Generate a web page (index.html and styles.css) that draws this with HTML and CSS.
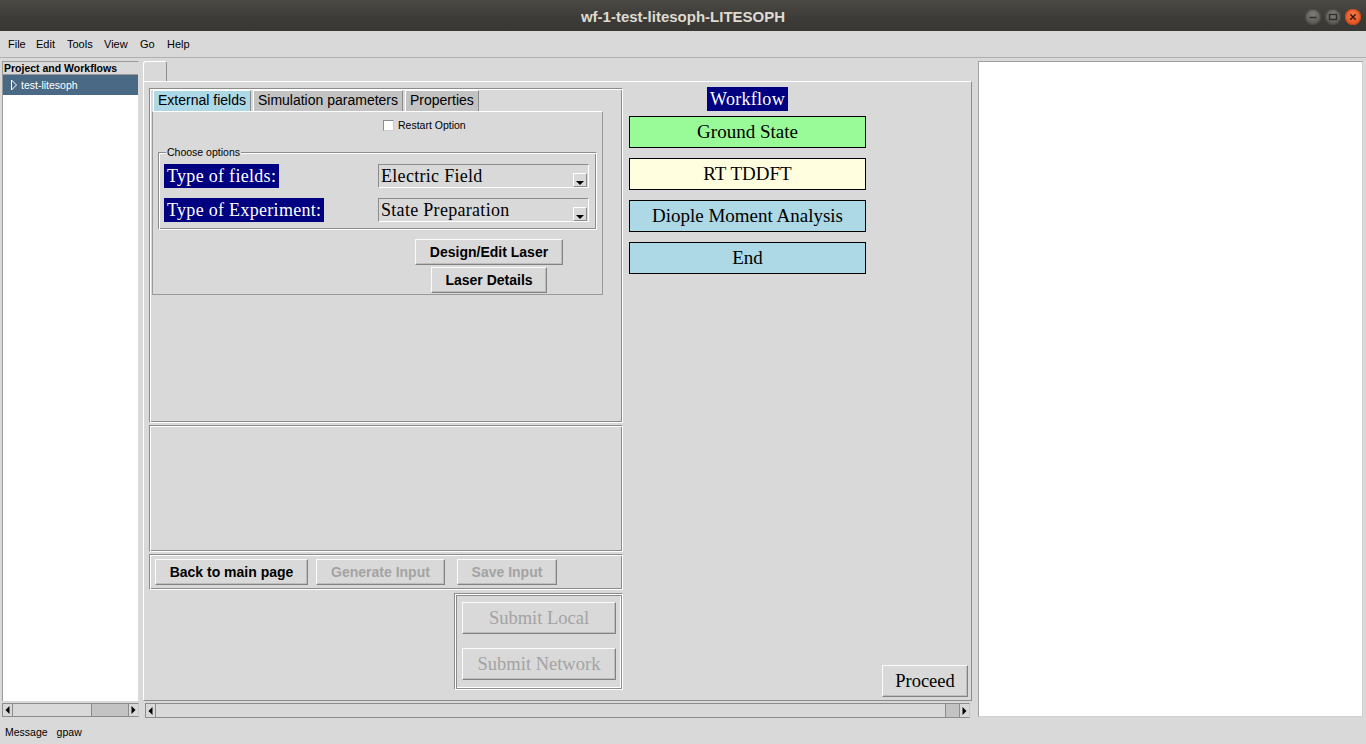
FILE: index.html
```html
<!DOCTYPE html>
<html>
<head>
<meta charset="utf-8">
<title>wf-1-test-litesoph-LITESOPH</title>
<link rel="stylesheet" href="styles.css">
</head>
<body>
<div class="titlebar">
  <span class="title">wf-1-test-litesoph-LITESOPH</span>
  <div class="winbtns">
    <span class="wbtn"><svg width="16" height="16" viewBox="0 0 16 16"><line x1="4.5" y1="8.5" x2="11.5" y2="8.5" stroke="#2e2d2a" stroke-width="1.4"/></svg></span>
    <span class="wbtn"><svg width="16" height="16" viewBox="0 0 16 16"><rect x="4.5" y="5.5" width="7" height="5" fill="none" stroke="#2e2d2a" stroke-width="1.3"/></svg></span>
    <span class="wbtn close"><svg width="16" height="16" viewBox="0 0 16 16"><path d="M5.3 5.3 L10.7 10.7 M10.7 5.3 L5.3 10.7" stroke="#3a1206" stroke-width="1.4"/></svg></span>
  </div>
</div>

<div class="menubar">
  <span class="menu m-file">File</span>
  <span class="menu m-edit">Edit</span>
  <span class="menu m-tools">Tools</span>
  <span class="menu m-view">View</span>
  <span class="menu m-go">Go</span>
  <span class="menu m-help">Help</span>
</div>

<div class="main">
  <div class="sidebar">
    <div class="tree">
      <div class="tree-head">Project and Workflows</div>
      <div class="tree-row">
        <svg class="expander" width="8" height="12" viewBox="0 0 8 12"><path d="M1.5 1 L6.5 6 L1.5 11 Z" fill="none" stroke="#ffffff" stroke-width="1"/></svg>
        <span>test-litesoph</span>
      </div>
    </div>
    <div class="scrollbar sb-left">
      <span class="sb-arrow"><svg width="5" height="8" viewBox="0 0 5 8"><path d="M4.5 0 L0.5 4 L4.5 8 Z" fill="#000"/></svg></span>
      <span class="sb-thumb thumb-left"></span>
      <span class="sb-trough"></span>
      <span class="sb-arrow"><svg width="5" height="8" viewBox="0 0 5 8"><path d="M0.5 0 L4.5 4 L0.5 8 Z" fill="#000"/></svg></span>
    </div>
  </div>

  <div class="center">
    <div class="nb-tabs"><span class="nb-tab"></span></div>
    <div class="nb-pane">
      <div class="leftcol">
        <div class="frame frame-top">
          <div class="subtabs">
            <span class="subtab active">External fields</span>
            <span class="subtab">Simulation parameters</span>
            <span class="subtab">Properties</span>
          </div>
          <div class="subpane">
            <div class="restart-row">
              <span class="checkbox"></span>
              <span class="restart-label">Restart Option</span>
            </div>
            <div class="labelframe">
              <span class="labelframe-title">Choose options</span>
              <div class="opt-row">
                <span class="navy-label">Type of fields:</span>
                <div class="combo">
                  <span class="combo-text">Electric Field</span>
                  <span class="combo-btn"><svg width="8" height="4" viewBox="0 0 8 4"><path d="M0 0 H8 L4 4 Z" fill="#000"/></svg></span>
                </div>
              </div>
              <div class="opt-row">
                <span class="navy-label">Type of Experiment:</span>
                <div class="combo">
                  <span class="combo-text">State Preparation</span>
                  <span class="combo-btn"><svg width="8" height="4" viewBox="0 0 8 4"><path d="M0 0 H8 L4 4 Z" fill="#000"/></svg></span>
                </div>
              </div>
            </div>
            <div class="laser-buttons">
              <button class="btn bold-btn btn-design">Design/Edit Laser</button>
              <button class="btn bold-btn btn-details">Laser Details</button>
            </div>
          </div>
        </div>
        <div class="frame frame-mid"></div>
        <div class="frame frame-actions">
          <button class="btn bold-btn btn-back">Back to main page</button>
          <button class="btn bold-btn disabled btn-generate">Generate Input</button>
          <button class="btn bold-btn disabled btn-save">Save Input</button>
        </div>
        <div class="submit-frame">
          <button class="btn serif-btn disabled">Submit Local</button>
          <button class="btn serif-btn disabled">Submit Network</button>
        </div>
      </div>

      <div class="wfcol">
        <span class="navy-label wf-title">Workflow</span>
        <div class="wf-step step-green">Ground State</div>
        <div class="wf-step step-yellow">RT TDDFT</div>
        <div class="wf-step step-blue">Diople Moment Analysis</div>
        <div class="wf-step step-blue">End</div>
      </div>

      <div class="proceed-col">
        <button class="btn serif-btn proceed">Proceed</button>
      </div>
    </div>
    <div class="scrollbar sb-main">
      <span class="sb-arrow"><svg width="5" height="8" viewBox="0 0 5 8"><path d="M4.5 0 L0.5 4 L4.5 8 Z" fill="#000"/></svg></span>
      <span class="sb-thumb thumb-main"></span>
      <span class="sb-trough"></span>
      <span class="sb-arrow"><svg width="5" height="8" viewBox="0 0 5 8"><path d="M0.5 0 L4.5 4 L0.5 8 Z" fill="#000"/></svg></span>
    </div>
  </div>

  <div class="rightpanel"></div>
</div>

<div class="statusbar">
  <span>Message</span>
  <span>gpaw</span>
</div>
</body>
</html>
```

FILE: styles.css
```css
* { box-sizing: border-box; margin: 0; padding: 0; }
html, body { width: 1366px; height: 744px; overflow: hidden; }
body {
  background: #d9d9d9;
  font-family: "Liberation Sans", Arial, sans-serif;
  display: flex;
  flex-direction: column;
  color: #000;
}

/* ---------- title bar ---------- */
.titlebar {
  height: 31px;
  flex: none;
  background: linear-gradient(#4a4944, #3c3b37 60%, #383733);
  position: relative;
  display: flex;
  align-items: center;
  justify-content: center;
}
.title {
  color: #dfdbd2;
  font-weight: bold;
  font-size: 15px;
  padding-top: 2px;
}
.winbtns {
  position: absolute;
  right: 5px;
  top: 9px;
  display: flex;
  gap: 4px;
}
.wbtn {
  width: 16px;
  height: 16px;
  border-radius: 50%;
  background: radial-gradient(circle at 50% 35%, #7d7c77, #5a5954 70%);
  box-shadow: inset 0 0 0 1px #4a4944;
  display: block;
}
.wbtn svg { display: block; }
.wbtn.close {
  background: radial-gradient(circle at 50% 35%, #f47a4e, #e2531f 75%);
  box-shadow: inset 0 0 0 1px #c9461a;
}

/* ---------- menu bar ---------- */
.menubar {
  height: 27px;
  flex: none;
  display: flex;
  align-items: center;
  border-bottom: 1px solid #b0b0b0;
  font-size: 11px;
  padding-left: 8px;
  padding-bottom: 1px;
}
.menu { display: inline-block; }
.m-file { width: 28px; }
.m-edit { width: 31px; }
.m-tools { width: 37px; }
.m-view { width: 36px; }
.m-go { width: 27px; }

/* ---------- main ---------- */
.main {
  height: 660px;
  flex: none;
  display: flex;
  padding: 3px 0 0 2px;
}

/* sidebar */
.sidebar {
  width: 137px;
  height: 656px;
  display: flex;
  flex-direction: column;
}
.tree {
  flex: 1;
  background: #fff;
  border-left: 1px solid #9a9a9a;
  border-top: 1px solid #9a9a9a;
  border-right: 1px solid #d9d9d9;
}
.tree-head {
  height: 13px;
  background: #d9d9d9;
  font-size: 10.5px;
  font-weight: bold;
  line-height: 13px;
  padding-left: 1px;
  border-bottom: 1px solid #9a9a9a;
}
.tree-row {
  height: 20px;
  background: #4a6984;
  color: #fff;
  font-size: 10.5px;
  display: flex;
  align-items: center;
  padding-left: 7px;
  gap: 3px;
}
.expander { display: block; }

/* scrollbars */
.scrollbar {
  display: flex;
  border: 1px solid #8c8c8c;
  border-right-color: #c8c8c8;
  background: #c3c3c3;
}
.sb-left { height: 14px; margin-top: 2px; }
.sb-main { height: 15px; margin: 2px 2px 0 2px; }
.sb-arrow {
  width: 10px;
  background: #d9d9d9;
  display: flex;
  align-items: center;
  justify-content: center;
  border-right: 1px solid #8c8c8c;
  flex: none;
}
.sb-arrow:last-child { border-right: none; border-left: 1px solid #8c8c8c; }
.sb-thumb {
  background: #d9d9d9;
  border-right: 1px solid #8c8c8c;
  flex: none;
}
.thumb-left { width: 79px; }
.thumb-main { width: 790px; }
.sb-trough { flex: 1; }

/* center notebook */
.center {
  width: 829px;
  margin-left: 4px;
  display: flex;
  flex-direction: column;
}
.nb-tabs { height: 20px; display: flex; }
.nb-tab {
  width: 24px;
  height: 20px;
  border: 1px solid #fff;
  border-right-color: #8c8c8c;
  border-bottom: none;
  border-radius: 3px 3px 0 0;
}
.nb-pane {
  height: 620px;
  border: 1px solid;
  border-color: #fff #8c8c8c #8c8c8c #fff;
  display: flex;
  padding: 5px 3px 3px 5px;
}

/* left column */
.leftcol {
  width: 474px;
  margin-top: 1px;
  display: flex;
  flex-direction: column;
}
.frame {
  border: 1px solid;
  border-color: #8c8c8c #fff #fff #8c8c8c;
  box-shadow: inset 1px 1px 0 #fff, inset -1px -1px 0 #8c8c8c;
}
.frame-top { height: 335px; padding: 1px 2px; }
.frame-mid { height: 127px; margin-top: 2px; }
.frame-actions {
  height: 36px;
  margin-top: 2px;
  display: flex;
  align-items: center;
  padding-left: 5px;
}

.subtabs { display: flex; gap: 2px; height: 21px; padding-left: 1px; }
.subtab {
  font-size: 14px;
  line-height: 19px;
  padding: 0 4px;
  background: #c3c3c3;
  border: 1px solid #fff;
  border-right-color: #8c8c8c;
  border-bottom: none;
}
.subtab.active { background: #add8e6; }
.subpane {
  width: 451px;
  height: 184px;
  border: 1px solid #9a9a9a;
  border-top-color: #fff;
  display: flex;
  flex-direction: column;
}
.restart-row {
  display: flex;
  align-items: center;
  margin-top: 7px;
  padding-left: 230px;
  height: 12px;
}
.checkbox {
  width: 11px;
  height: 11px;
  background: #fff;
  border: 1px solid;
  border-color: #8c8c8c #d0d0d0 #d0d0d0 #8c8c8c;
}
.restart-label { font-size: 10.5px; margin-left: 4px; }

.labelframe {
  position: relative;
  margin: 21px 0 0 5px;
  width: 439px;
  height: 78px;
  border: 1px solid;
  border-color: #8c8c8c #fff #fff #8c8c8c;
  box-shadow: inset 1px 1px 0 #fff, inset -1px -1px 0 #8c8c8c;
  padding: 11px 0 0 5px;
  display: flex;
  flex-direction: column;
  gap: 10px;
}
.labelframe-title {
  position: absolute;
  top: -7px;
  left: 7px;
  padding: 0 1px;
  background: #d9d9d9;
  font-size: 10.5px;
  line-height: 13px;
}
.opt-row {
  display: grid;
  grid-template-columns: 214px 211px;
  height: 24px;
}
.navy-label {
  justify-self: start;
  background: #000080;
  color: #fff;
  font-family: "Liberation Serif", "Times New Roman", serif;
  font-size: 18px;
  letter-spacing: 0.3px;
  line-height: 24px;
  height: 24px;
  padding: 0 3px;
}
.combo {
  display: flex;
  border: 1px solid;
  border-color: #8c8c8c #fff #fff #8c8c8c;
  height: 24px;
}
.combo-text {
  flex: 1;
  font-family: "Liberation Serif", "Times New Roman", serif;
  font-size: 18px;
  letter-spacing: 0.3px;
  line-height: 22px;
  padding-left: 2px;
}
.combo-btn {
  width: 14px;
  height: 14px;
  align-self: flex-end;
  margin: 0 1px 0 0;
  border: 1px solid;
  border-color: #fff #8c8c8c #8c8c8c #fff;
  display: flex;
  align-items: flex-end;
  justify-content: center;
  padding-bottom: 1px;
}
.combo-btn svg { display: block; }

.laser-buttons {
  margin: 9px 0 0 262px;
  width: 148px;
  display: flex;
  flex-direction: column;
  align-items: center;
  gap: 2px;
}

/* buttons */
.btn {
  font-family: "Liberation Sans", Arial, sans-serif;
  background: #d9d9d9;
  color: #000;
  border: 1px solid;
  border-color: #fbfbfb #828282 #828282 #fbfbfb;
  box-shadow: inset -1px -1px 0 #bdbdbd;
  display: flex;
  align-items: center;
  justify-content: center;
}
.bold-btn { font-size: 14px; font-weight: bold; height: 26px; }
.btn-design { width: 148px; }
.btn-details { width: 116px; }
.btn-back { width: 153px; }
.btn-generate { width: 129px; margin-left: 8px; }
.btn-save { width: 100px; margin-left: 12px; }
.serif-btn {
  font-family: "Liberation Serif", "Times New Roman", serif;
  font-size: 18.5px;
}
.disabled { color: #a3a3a3; }

.submit-frame {
  align-self: flex-end;
  width: 169px;
  height: 97px;
  margin-top: 3px;
  border: 1px solid;
  border-color: #8c8c8c #fff #fff #8c8c8c;
  box-shadow: inset 1px 1px 0 #fff, inset 2px 2px 0 #8c8c8c,
              inset -1px -1px 0 #8c8c8c, inset -2px -2px 0 #fff;
  display: flex;
  flex-direction: column;
  align-items: flex-end;
  padding: 8px 6px 0 0;
  gap: 14px;
}
.submit-frame .btn { width: 154px; height: 32px; }

/* workflow column */
.wfcol {
  width: 237px;
  margin-left: 6px;
  display: flex;
  flex-direction: column;
  align-items: center;
  gap: 10px;
}
.wf-title { margin-bottom: -5px; align-self: center; }
.wf-step {
  width: 237px;
  height: 32px;
  border: 1px solid #000;
  font-family: "Liberation Serif", "Times New Roman", serif;
  font-size: 19px;
  display: flex;
  align-items: center;
  justify-content: center;
}
.step-green { background: #98fb98; }
.step-yellow { background: #ffffe0; }
.step-blue { background: #add8e6; }

.proceed-col {
  flex: 1;
  display: flex;
  align-items: flex-end;
  justify-content: flex-end;
}
.proceed { width: 86px; height: 32px; font-size: 18.5px; }

/* right panel */
.rightpanel {
  width: 385px;
  height: 656px;
  margin-left: 6px;
  background: #fff;
  border: 1px solid;
  border-color: #a0a0a0 #d0d0d0 #d0d0d0 #a0a0a0;
}

/* status bar */
.statusbar {
  height: 26px;
  flex: none;
  display: flex;
  align-items: center;
  gap: 9px;
  padding: 2px 0 0 5px;
  font-size: 10.5px;
}
```
